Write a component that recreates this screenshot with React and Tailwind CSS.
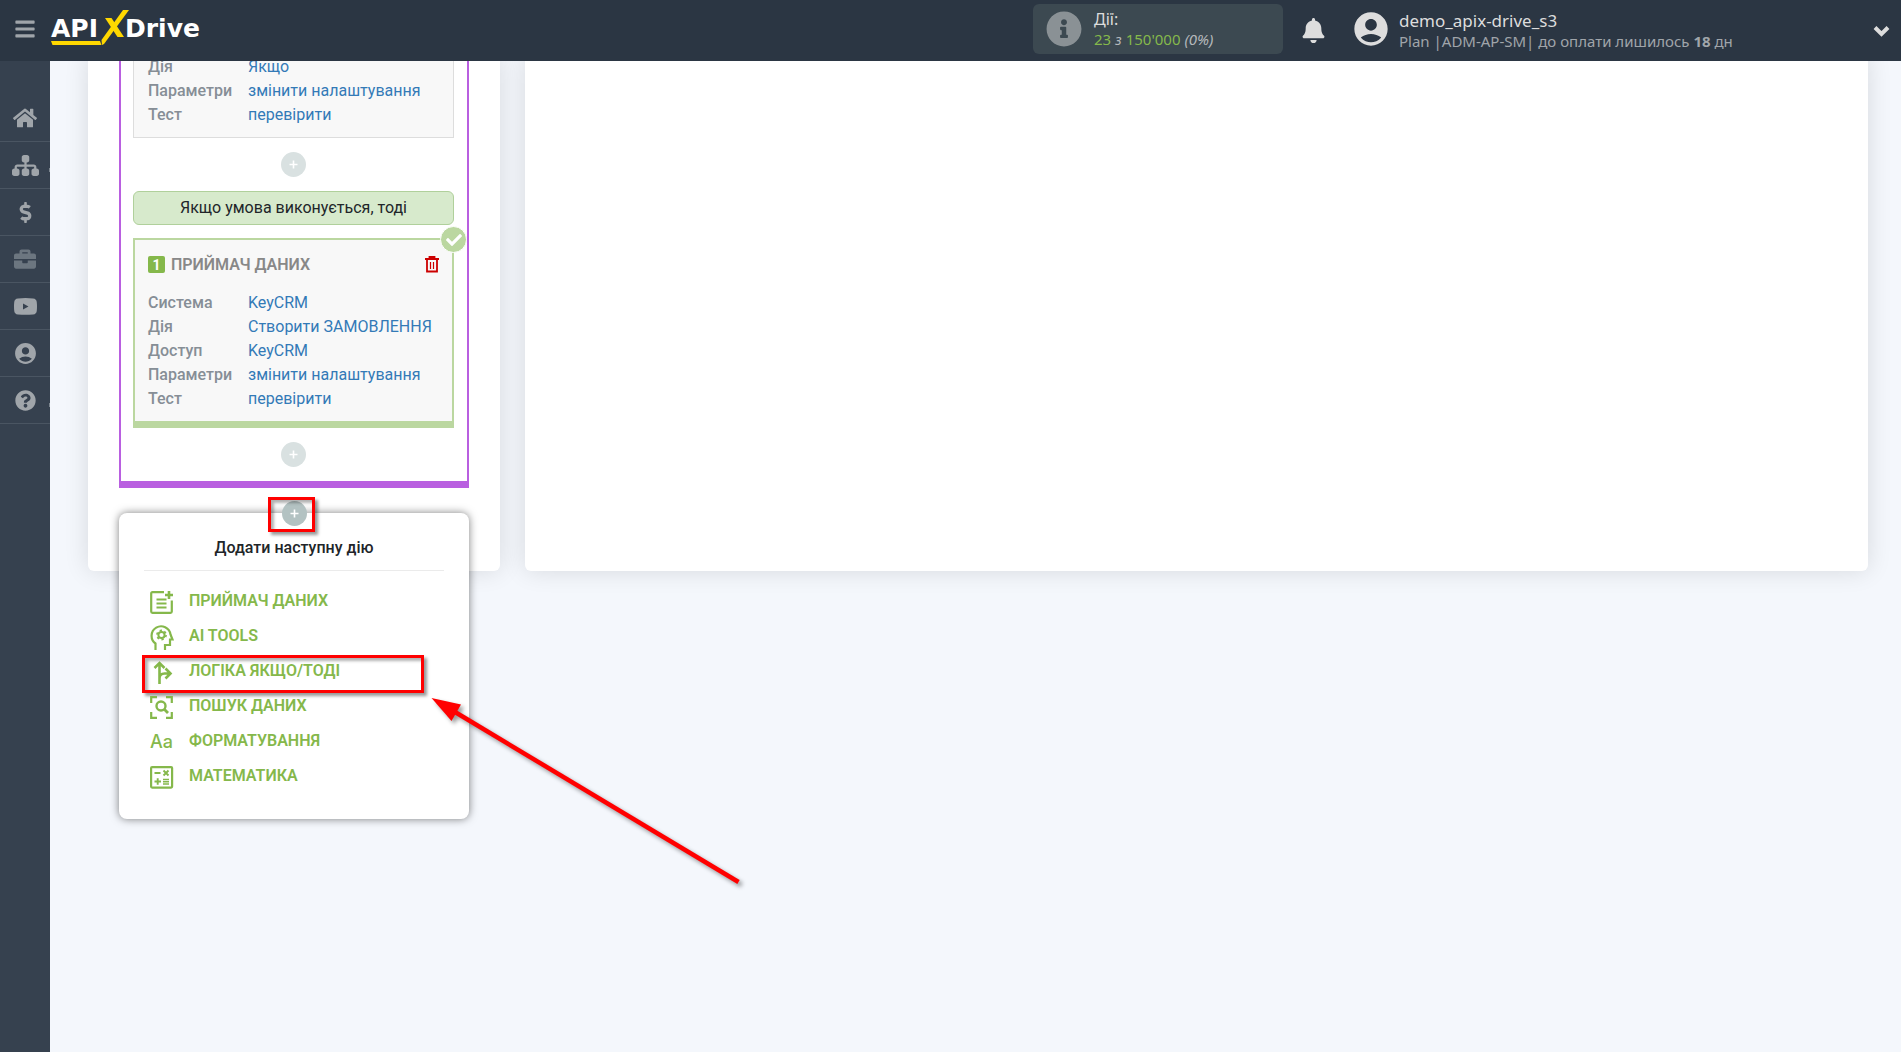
import {
  FaBars,
  FaBell,
  FaBriefcase,
  FaCheck,
  FaDollarSign,
  FaHome,
  FaInfoCircle,
  FaQuestionCircle,
} from "react-icons/fa";
import { FaSitemap } from "react-icons/fa6";
import { MdAccountCircle } from "react-icons/md";

function YoutubeIcon() {
  return (
    <svg width="23" height="17" viewBox="0 0 23 17" fill="currentColor">
      <path fillRule="evenodd" d="M4 .5Q11.500-.3 19 .5Q22.600.8 22.800 4.500Q23.200 8.500 22.800 12.500Q22.600 16.200 19 16.500Q11.500 17 4 16.500Q.4 16.200.2 12.500Q-.2 8.500.2 4.500Q.4.800 4 .5ZM9 5.500V11.500L14.500 8.500Z" />
    </svg>
  );
}

function TrashIcon() {
  return (
    <svg width="14" height="17" viewBox="0 0 14 17" fill="none" stroke="#cc0000" strokeWidth="1.800">
      <path d="M0 3H14M4.500 3V1H9.500V3M2 4V15.500H12V4" />
      <path d="M5.500 6V13M8.500 6V13" strokeWidth="1.200" />
    </svg>
  );
}

function ReceiverIcon() {
  return (
    <svg width="24" height="23" viewBox="0 0 24 23" fill="none" stroke="currentColor" strokeWidth="2.200">
      <path d="M14 1.200H2.500Q1.200 1.200 1.200 2.500V20.500Q1.200 21.800 2.500 21.800H20.500Q21.800 21.800 21.800 20.500V9.500" />
      <path d="M6.500 8.500H16.500M6.500 12.500H16.500M6.500 16.500H16.500" />
      <path d="M19 0V8M15 4H23" strokeWidth="2.600" />
    </svg>
  );
}

function AiIcon() {
  return (
    <svg width="24" height="26" viewBox="0 0 24 26" fill="none" stroke="currentColor" strokeWidth="2.200">
      <path d="M5.500 26V19.500A9.500 9.500 0 1 1 20.500 10.500L22.500 15.500H20V21H15V26" />
      <circle cx="11.500" cy="11" r="3.100" strokeWidth="2" />
      <circle cx="11.500" cy="11" r="4.600" strokeWidth="1.600" strokeDasharray="2.300 2.517" />
    </svg>
  );
}

function BranchIcon() {
  return (
    <svg width="24" height="23" viewBox="0 0 24 23" fill="none" stroke="currentColor" strokeWidth="2.600">
      <path d="M9.500 23V2M4.500 7L9.500 2L14.500 7M9.500 17.500Q9.500 12.500 14.500 12.500H20M15.500 7.500L20.500 12.500L15.500 17.500" />
    </svg>
  );
}

function SearchIcon() {
  return (
    <svg width="24" height="23" viewBox="0 0 24 23" fill="none" stroke="currentColor" strokeWidth="2.200">
      <path d="M1.200 7V1.200H7M16 1.200H21.800V7M21.800 16V21.800H16M7 21.800H1.200V16" />
      <circle cx="11" cy="10" r="4.500" strokeWidth="2.400" />
      <path d="M14.300 13.300L18 17" strokeWidth="2.800" />
    </svg>
  );
}

function MathIcon() {
  return (
    <svg width="24" height="23" viewBox="0 0 24 23" fill="none" stroke="currentColor">
      <rect x="1.100" y="1.100" width="21" height="20.500" rx="1" strokeWidth="2.200" />
      <path d="M4.500 7H10.500M13.500 4.500L18.500 9.500M18.500 4.500L13.500 9.500M4.500 15.500H11M7.700 12.200V18.800" strokeWidth="1.900" />
      <path d="M13 13.500H19M13 15.800H19M13 18H19" strokeWidth="1.400" />
    </svg>
  );
}

const sideItems = [
  { label: "Головна", icon: <FaHome size={24} /> },
  { label: "Зв'язки", icon: <FaSitemap size={27} />, sub: true },
  { label: "Оплата", icon: <FaDollarSign size={21} /> },
  { label: "Проєкти", icon: <FaBriefcase size={22} />, dim: true },
  { label: "Відео", icon: <YoutubeIcon /> },
  { label: "Профіль", icon: <MdAccountCircle size={25} /> },
  { label: "Допомога", icon: <FaQuestionCircle size={21} />, sub: true },
];

const logicRows = [
  ["Дія", "Якщо"],
  ["Параметри", "змінити налаштування"],
  ["Тест", "перевірити"],
];

const receiverRows = [
  ["Система", "KeyCRM"],
  ["Дія", "Створити ЗАМОВЛЕННЯ"],
  ["Доступ", "KeyCRM"],
  ["Параметри", "змінити налаштування"],
  ["Тест", "перевірити"],
];

const actions = [
  { label: "ПРИЙМАЧ ДАНИХ", icon: <ReceiverIcon /> },
  { label: "AI TOOLS", icon: <AiIcon /> },
  { label: "ЛОГІКА ЯКЩО/ТОДІ", icon: <BranchIcon />, marked: true },
  { label: "ПОШУК ДАНИХ", icon: <SearchIcon /> },
  { label: "ФОРМАТУВАННЯ", icon: <span className="font-['Inter'] text-lg leading-6 font-medium">Aa</span> },
  { label: "МАТЕМАТИКА", icon: <MathIcon /> },
];

function Logo() {
  return (
    <a href="#" aria-label="APIXDrive" className="mb-2">
      <svg
        width="156"
        height="38"
        viewBox="0 0 156 38"
        fill="#ffffff"
        className="font-['DejaVu_Sans',sans-serif] text-[25px] font-bold"
      >
        <text x="1" y="29">API</text>
        <text x="75" y="29">Drive</text>
        <g fill="#ffd800">
          <path d="M1 33H50L51.500 37H2.500Z" />
          <path d="M51.500 32L73 2H79L54 36L52 37Z" />
          <path d="M55 10H61.500L74 29H67.500Z" />
        </g>
      </svg>
    </a>
  );
}

function Header() {
  return (
    <header className="fixed inset-x-0 top-0 z-20 flex h-[61px] items-center bg-[#2b3643] pr-[11px] font-['Noto_Sans',sans-serif]">
      <button aria-label="Меню" className="flex w-[50px] justify-center pb-1 text-[#a0a5aa]">
        <FaBars size={22} />
      </button>
      <Logo />
      <div className="mb-1 ml-auto flex h-[50px] w-[250px] items-center gap-3 rounded-md bg-[#3c4951] px-[13px]">
        <FaInfoCircle size={36} className="text-[#8a9195]" />
        <div className="leading-5 text-[#dddddd]">
          <p>Дії:</p>
          <p className="text-[15px] text-[#85b84b]">
            23 <i className="text-[#b4b8bb]">з</i> 150'000 <i className="text-[#b4b8bb]">(0%)</i>
          </p>
        </div>
      </div>
      <button aria-label="Сповіщення" className="mr-[25px] ml-[18px] text-[#dddddd]">
        <FaBell size={25} />
      </button>
      <button className="flex w-[539px] items-center gap-2 text-left text-[#dddddd]">
        <MdAccountCircle size={40} className="mb-1" />
        <span className="flex flex-col leading-5">
          <span className="text-[17px]">demo_apix-drive_s3</span>
          <span className="text-[15px] text-[#a0a5aa]">
            Plan |ADM-AP-SM| до оплати лишилось <b>18</b> дн
          </span>
        </span>
        <svg className="ml-auto" width="17" height="12" viewBox="0 0 17 12" fill="none" stroke="currentColor" strokeWidth="4">
          <path d="M2 2.500L8.500 9L15 2.500" />
        </svg>
      </button>
    </header>
  );
}

function Sidebar() {
  return (
    <nav className="w-[50px] shrink-0 bg-[#36414f] pt-[95px]">
      {sideItems.map((item) => (
        <a
          key={item.label}
          href="#"
          aria-label={item.label}
          className={`relative flex h-[47px] items-center justify-center border-b border-[#4a5562] ${item.dim ? "text-[#6c7680]" : "text-[#a0a5aa]"}`}
        >
          {item.icon}
          {item.sub && <span className="absolute right-0 bottom-4 h-1 w-px bg-[#7d868f]" />}
        </a>
      ))}
    </nav>
  );
}

function Rows({ rows }) {
  return (
    <dl className="grid grid-cols-[100px_1fr] leading-6">
      {rows.map(([label, value]) => (
        <div key={label} className="contents">
          <dt className="font-medium text-[#868e96]">{label}</dt>
          <dd className="whitespace-nowrap">
            <a href="#" className="text-[#337ab7]">{value}</a>
          </dd>
        </div>
      ))}
    </dl>
  );
}

function PlusButton({ active }) {
  return (
    <button
      aria-label="Додати"
      className={`mx-auto flex size-[25px] items-center justify-center rounded-full text-white ${active ? "relative z-10 bg-[#b3c2c2]" : "bg-[#d9e1e1]"}`}
    >
      <svg width="9" height="9" viewBox="0 0 9 9" stroke="currentColor" strokeWidth="1.600">
        <path d="M4.500 .5V8.500M.5 4.500H8.500" />
      </svg>
    </button>
  );
}

function ActionMenu() {
  return (
    <div className="absolute inset-x-0 top-3 h-[306px] rounded-lg bg-white px-[25px] pt-[23px] shadow-[0_0_8px_rgba(0,0,0,0.5)]">
      <h3 className="border-b border-[#ebebeb] pb-[10px] text-center leading-6 font-medium text-[#212529]">
        Додати наступну дію
      </h3>
      <ul className="pt-3">
        {actions.map((action) => (
          <li key={action.label} className="relative">
            <button className="flex h-[35px] items-center pl-[6px] font-semibold text-[#85b84b]">
              <span className="flex w-[39px] items-center pt-[3px]">{action.icon}</span>
              {action.label}
            </button>
            {action.marked && (
              <span className="pointer-events-none absolute top-[2px] -left-[2px] h-[38px] w-[282px] border-3 border-[#ff0000] shadow-[3px_3px_3px_rgba(0,0,0,0.4),inset_3px_3px_3px_rgba(0,0,0,0.3)]" />
            )}
          </li>
        ))}
      </ul>
      <svg
        className="pointer-events-none absolute top-[180px] left-[308px] drop-shadow-[3px_3px_2px_rgba(0,0,0,0.4)]"
        width="320"
        height="195"
        viewBox="0 0 320 195"
        fill="#ff0000"
      >
        <path d="M4.500 5L34 11.500L24.500 28Z" />
        <path d="M28 19L311.500 189" stroke="#ff0000" strokeWidth="4.500" />
      </svg>
    </div>
  );
}

export default function App() {
  return (
    <div className="flex min-h-screen bg-[#f4f7fc] font-['Roboto',sans-serif] text-base">
      <Header />
      <Sidebar />
      <main className="flex min-w-0 flex-1 items-start pt-[55px] pr-[33px] pl-[38px]">
        <div className="flex flex-1 items-stretch gap-[25px]">
          <section className="w-[412px] shrink-0 rounded-md bg-white px-[31px] pb-[45px] shadow-[0_0_25px_rgba(0,0,0,0.12)]">
            <div className="border-x-2 border-b-7 border-[#b95fe0] pr-[13px] pb-[14px] pl-3">
              <div className="border border-t-0 border-[#dddddd] bg-[#f8f8f8] px-[14px] pb-[10px]">
                <Rows rows={logicRows} />
              </div>
              <div className="py-[14px]">
                <PlusButton />
              </div>
              <p className="rounded-md border border-[#b0d09b] bg-[#d7eacc] text-center leading-8 text-[#212529]">
                Якщо умова виконується, тоді
              </p>
              <div className="relative mt-[13px] mb-[14px] border-2 border-b-7 border-[#bbd7a0] bg-[#f8f8f8] px-[13px] pt-4 pb-[10px]">
                <span className="absolute -top-[14px] -right-[15px] flex size-[27px] items-center justify-center rounded-full border border-white bg-[#bbd7a0] text-white">
                  <FaCheck size={16} />
                </span>
                <div className="mb-[18px] flex items-center gap-[6px] leading-[17px]">
                  <span className="flex size-[17px] items-center justify-center rounded-xs bg-[#85b84b] text-sm font-bold text-white">1</span>
                  <h2 className="font-semibold text-[#888888]">ПРИЙМАЧ ДАНИХ</h2>
                  <button aria-label="Видалити" className="ml-auto">
                    <TrashIcon />
                  </button>
                </div>
                <Rows rows={receiverRows} />
              </div>
              <PlusButton />
            </div>
            <div className="relative pt-[13px]">
              <div className="relative">
                <PlusButton active />
                <ActionMenu />
                <span className="pointer-events-none absolute -top-1 left-[149px] z-10 h-[35px] w-[47px] border-3 border-[#ff0000] shadow-[3px_3px_3px_rgba(0,0,0,0.4),inset_3px_3px_3px_rgba(0,0,0,0.3)]" />
              </div>
            </div>
          </section>
          <section className="flex-1 rounded-md bg-white shadow-[0_0_25px_rgba(0,0,0,0.12)]" />
        </div>
      </main>
    </div>
  );
}
